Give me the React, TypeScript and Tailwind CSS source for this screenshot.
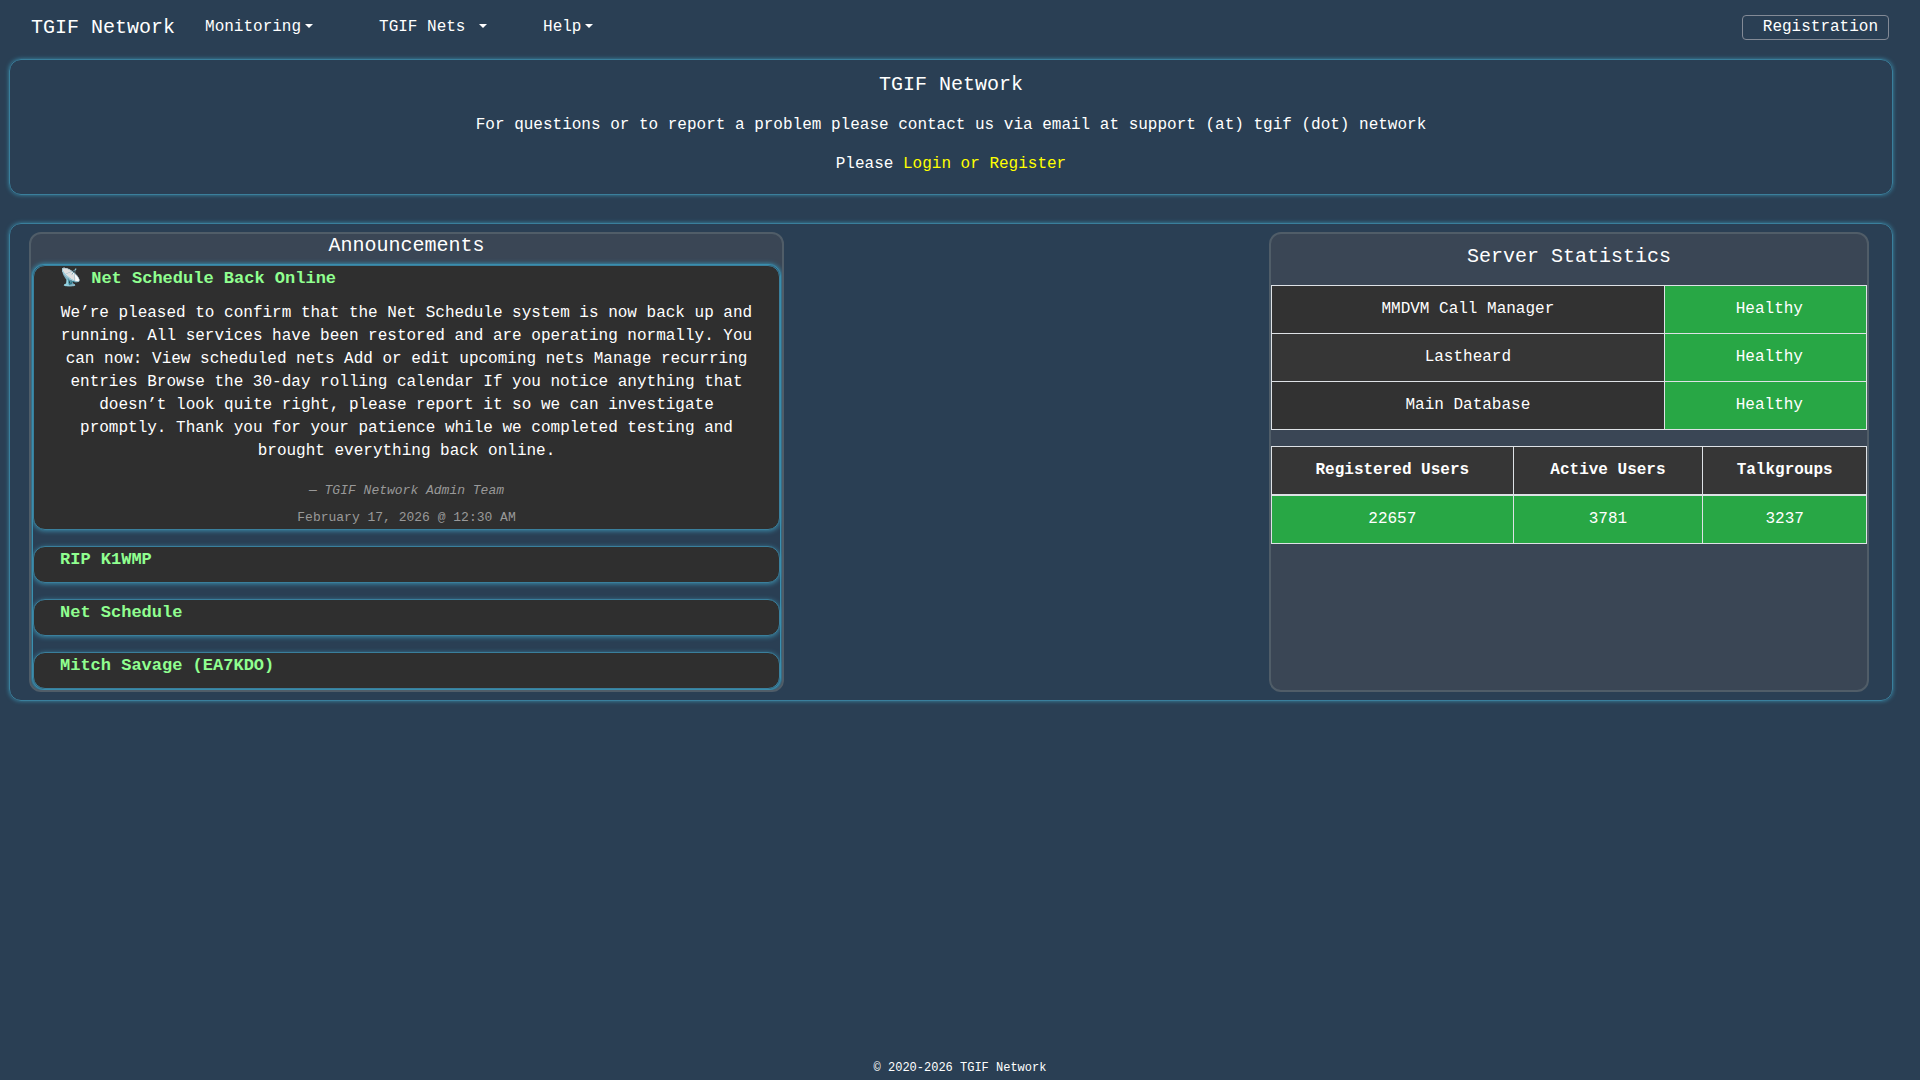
import React from 'react';

interface Announcement {
  title: string;
  body?: string;
  author?: string;
  date?: string;
}

const menus = [
  { label: 'Monitoring', className: 'w-[174px]' },
  { label: 'TGIF Nets ', className: 'w-[164px]' },
  { label: 'Help', className: '' },
];

const announcements: Announcement[] = [
  {
    title: '📡 Net Schedule Back Online',
    body: 'We’re pleased to confirm that the Net Schedule system is now back up and running. All services have been restored and are operating normally. You can now: View scheduled nets Add or edit upcoming nets Manage recurring entries Browse the 30-day rolling calendar If you notice anything that doesn’t look quite right, please report it so we can investigate promptly. Thank you for your patience while we completed testing and brought everything back online.',
    author: '— TGIF Network Admin Team',
    date: 'February 17, 2026 @ 12:30 AM',
  },
  { title: 'RIP K1WMP' },
  { title: 'Net Schedule' },
  { title: 'Mitch Savage (EA7KDO)' },
];

const services = ['MMDVM Call Manager', 'Lastheard', 'Main Database'];

const totals = [
  { label: 'Registered Users', value: 22657 },
  { label: 'Active Users', value: 3781 },
  { label: 'Talkgroups', value: 3237 },
];

function Navbar() {
  return (
    <nav className="flex items-start justify-between pt-[15px] px-[31px] h-[59px]">
      <div className="flex items-start pt-px">
        <a href="#" className="text-[20px] leading-6 mr-[30px]">TGIF Network</a>
        {menus.map(menu => (
          <div key={menu.label} className={menu.className}>
            <button className="flex items-center gap-1 leading-[23px] whitespace-pre cursor-pointer">
              {menu.label}
              <span className="border-x-4 border-t-4 border-x-transparent border-t-white mb-1" />
            </button>
          </div>
        ))}
      </div>
      <a href="#" className="border border-[#838a96] rounded pl-5 pr-[10px] leading-[23px]">Registration</a>
    </nav>
  );
}

function AnnouncementItem({ item }: { item: Announcement }) {
  return (
    <details
      open={!!item.body}
      className="bg-[#2f2f2f] border border-[#3a7f9c] rounded-xl shadow-[0_1px_5px_#3a8aa8] px-[26px]"
    >
      <summary className="list-none cursor-pointer text-[17px] leading-6 font-bold text-[#90ff90] pt-px mb-[10px]">
        {item.title}
      </summary>
      {item.body && (
        <div className="text-center pt-px">
          <p>{item.body}</p>
          <p className="mt-4 text-[13px] leading-[23px] italic text-[#999]">{item.author}</p>
          <p className="mt-1 text-[13px] leading-[23px] text-[#999]">{item.date}</p>
        </div>
      )}
    </details>
  );
}

function Announcements() {
  return (
    <section className="w-[755px] bg-[#3a4655] border-2 border-[#505d68] rounded-xl overflow-hidden">
      <h2 className="text-center text-[20px] leading-6 mb-[6px]">Announcements</h2>
      <div className="mx-px bg-[#2a3f54] border border-[#3a90b0] rounded-xl shadow-[0_0_5px_#3a90b0] flex flex-col gap-4">
        {announcements.map(item => (
          <AnnouncementItem key={item.title} item={item} />
        ))}
      </div>
    </section>
  );
}

function ServerStatistics() {
  return (
    <section className="w-[600px] bg-[#3a4655] border-2 border-[#505d68] rounded-xl">
      <h2 className="text-center text-[20px] leading-6 pt-[11px] mb-4">Server Statistics</h2>

      {/* Service health */}
      <table className="w-full border-collapse text-center mb-4">
        <tbody>
          {services.map(name => (
            <tr key={name} className="bg-[#323232] even:bg-[#363636]">
              <td className="w-[66%] border border-[#dee2e6] p-3">{name}</td>
              <td className="border border-[#dee2e6] bg-[#28a745] py-3 pr-3 pl-5">Healthy</td>
            </tr>
          ))}
        </tbody>
      </table>

      {/* Totals */}
      <table className="w-full border-collapse text-center">
        <thead>
          <tr className="bg-[#363636]">
            {totals.map(total => (
              <th key={total.label} className="border border-b-2 border-[#dee2e6] p-3 font-bold">{total.label}</th>
            ))}
          </tr>
        </thead>
        <tbody>
          <tr className="bg-[#28a745]">
            {totals.map(total => (
              <td key={total.label} className="border border-[#dee2e6] p-3">{total.value}</td>
            ))}
          </tr>
        </tbody>
      </table>
    </section>
  );
}

function App() {
  return (
    <div className="min-h-screen flex flex-col bg-[#2a3f54] text-white text-[16px] leading-[23px] font-['Liberation_Mono',monospace]">
      <Navbar />
      <main className="ml-[9px] mr-[27px]">
        <header className="border border-[#3a7f9c] rounded-xl shadow-[0_0_4px_#3a8aa8] text-center pt-[13px] pb-[18px]">
          <h1 className="text-[20px] leading-6 mb-[17px]">TGIF Network</h1>
          <p className="mb-4">
            For questions or to report a problem please contact us via email at support (at) tgif (dot) network
          </p>
          <p>
            Please <a href="#" className="text-[#ffff00]">Login or Register</a>
          </p>
        </header>

        <div className="mt-7 border border-[#3a7f9c] rounded-xl shadow-[0_0_4px_#3a8aa8] flex justify-between pl-[19px] pr-[23px] py-2">
          <Announcements />
          <ServerStatistics />
        </div>
      </main>
      <footer className="mt-auto pb-[3px] text-center text-[12px] leading-[18px]">© 2020-2026 TGIF Network</footer>
    </div>
  );
}

export default App;
